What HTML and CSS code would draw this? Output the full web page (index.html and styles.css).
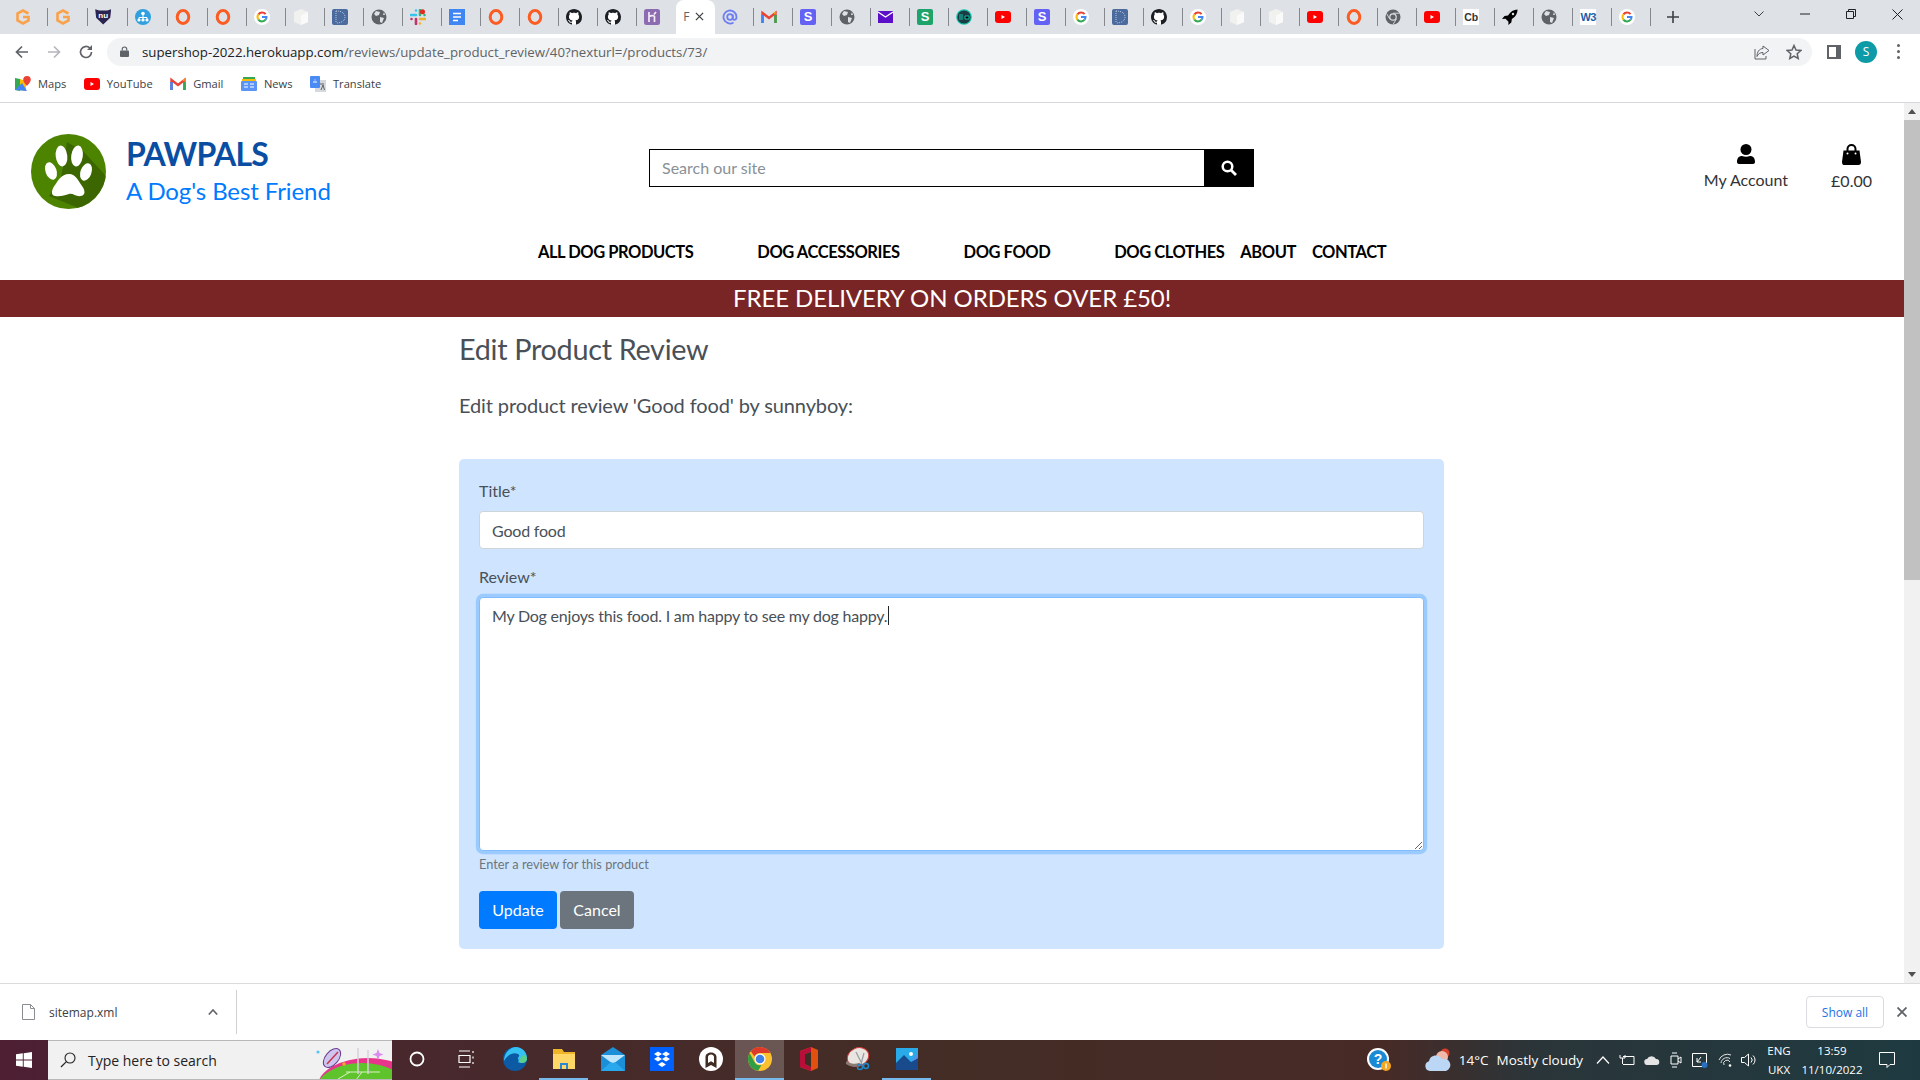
FILE: index.html
```html
<!DOCTYPE html>
<html lang="en">
<head>
  <meta charset="UTF-8" />
  <meta name="viewport" content="width=device-width, initial-scale=1.0"/>
  <title>PawPals - Edit Product Review</title>
  <link rel="stylesheet" href="styles.css">
</head>
<body>

  <!-- favicon symbols, reused by the tab strip -->
  <svg class="symbols" width="0" height="0">
    <symbol id="i-gorange" viewBox="0 0 16 16"><path d="M13.500 4.500L8 1.500 2.500 4.500v7L8 14.500l5.500-3V8H8" fill="none" stroke="#f9a24c" stroke-width="2.600"/></symbol>
    <symbol id="i-sitemap" viewBox="0 0 16 16"><circle cx="8" cy="8" r="8" fill="#2f9fe0"/><path d="M8 5v3M4 11V8.500h8V11M8 8v3" stroke="#fff" fill="none"/><circle cx="8" cy="4.500" r="1.800" fill="#fff"/><circle cx="4" cy="11" r="1.600" fill="#fff"/><circle cx="8" cy="11" r="1.600" fill="#fff"/><circle cx="12" cy="11" r="1.600" fill="#fff"/></symbol>
    <symbol id="i-o" viewBox="0 0 16 16"><ellipse cx="8" cy="8" rx="5.800" ry="6.500" fill="none" stroke="#fc5b21" stroke-width="3"/></symbol>
    <symbol id="i-google" viewBox="0 0 16 16"><circle cx="8" cy="8" r="8" fill="#fff"/><path d="M11.600 5.200A4.500 4.500 0 0 0 4.400 5.400" fill="none" stroke="#ea4335" stroke-width="2"/><path d="M4.400 5.400a4.500 4.500 0 0 0 0 5.200" fill="none" stroke="#fbbc05" stroke-width="2"/><path d="M4.400 10.600a4.500 4.500 0 0 0 7.200 .1" fill="none" stroke="#34a853" stroke-width="2"/><path d="M11.600 10.700A4.500 4.500 0 0 0 12.500 7.900H8" fill="none" stroke="#4285f4" stroke-width="2"/></symbol>
    <symbol id="i-cube" viewBox="0 0 16 16"><path d="M8 0l7 3v10l-7 3-7-3V3z" fill="#f1f1ef"/><path d="M8 6.500l7-3.500v10l-7 3z" fill="#fafafa"/></symbol>
    <symbol id="i-d" viewBox="0 0 16 16"><rect width="16" height="16" rx="2" fill="#4b6a9e"/><path d="M4 2c6 0 9 2.500 9 6s-3 6-9 6" fill="none" stroke="#b9c8e0" stroke-dasharray="1 1"/><path d="M4 2v12" stroke="#b9c8e0" stroke-dasharray="1 1"/></symbol>
    <symbol id="i-globe" viewBox="0 0 16 16"><circle cx="8" cy="8" r="7.500" fill="#5f6368"/><path d="M5 2l4 1-1 3-3 1-2-2zM9 8l4 1-2 5-2-1zM13 3l1 3-2 0z" fill="#dee1e6"/></symbol>
    <symbol id="i-slack" viewBox="0 0 16 16"><path d="M1 6h5M6 1.500v0" stroke="#36c5f0" stroke-width="2.600" stroke-linecap="round"/><path d="M10 1v5M14.500 6h0" stroke="#2eb67d" stroke-width="2.600" stroke-linecap="round"/><path d="M10 10h5M10 14.500v0" stroke="#ecb22e" stroke-width="2.600" stroke-linecap="round"/><path d="M6 10v5M1.500 10h0" stroke="#c2336e" stroke-width="2.600" stroke-linecap="round"/><circle cx="12.500" cy="2.800" r="2.500" fill="#e8251f"/></symbol>
    <symbol id="i-docs" viewBox="0 0 16 16"><rect width="16" height="18" y="-1" rx="1.500" fill="#3f86f3"/><path d="M4 4.500h8M4 8h8M4 11.500h5" stroke="#fff" stroke-width="1.600"/></symbol>
    <symbol id="i-github" viewBox="0 0 16 16"><circle cx="8" cy="8" r="7.500" fill="#fff"/><path fill="#1b1f23" d="M8 0C3.580 0 0 3.580 0 8c0 3.540 2.290 6.530 5.470 7.590.4.07.55-.17.55-.38 0-.19-.01-.82-.01-1.490-2.010.37-2.530-.49-2.690-.94-.09-.23-.48-.94-.82-1.130-.28-.15-.68-.52-.01-.53.63-.01 1.080.58 1.230.82.72 1.210 1.870.87 2.330.66.07-.52.28-.87.51-1.070-1.780-.2-3.640-.89-3.640-3.950 0-.87.31-1.590.82-2.150-.08-.2-.36-1.020.08-2.120 0 0 .67-.21 2.200.82.64-.18 1.320-.27 2-.27s1.360.09 2 .27c1.530-1.040 2.200-.82 2.200-.82.44 1.100.16 1.920.08 2.120.51.56.82 1.270.82 2.150 0 3.070-1.870 3.750-3.650 3.950.29.25.54.73.54 1.480 0 1.070-.01 1.930-.01 2.200 0 .21.15.46.55.38A8.013 8.013 0 0 0 16 8c0-4.420-3.580-8-8-8z"/></symbol>
    <symbol id="i-heroku" viewBox="0 0 16 16"><rect width="16" height="16" rx="2.500" fill="#8c6bb1"/><path d="M5 3v10M5 7.500c2-1 5-1.500 5.500 0V13M10 5.500l2-2.500" stroke="#f2ecf7" stroke-width="1.700" fill="none"/></symbol>
    <symbol id="i-at" viewBox="0 0 16 16"><circle cx="8" cy="8" r="2.800" fill="none" stroke="#6d7ff0" stroke-width="1.800"/><path d="M10.800 5.500v4c0 2 3.700 2 3.700-1.500a6.500 6.500 0 1 0-3 5.500" fill="none" stroke="#6d7ff0" stroke-width="1.800"/></symbol>
    <symbol id="i-gmail" viewBox="0 0 16 16"><path d="M1.500 14V4l6.500 5 6.500-5v10" fill="none" stroke="#ea4335" stroke-width="2.400"/><path d="M1.500 6v8" stroke="#4285f4" stroke-width="2.600"/><path d="M14.500 6v8" stroke="#34a853" stroke-width="2.600"/><path d="M12.500 4l2-1.200v3" fill="#fbbc05"/></symbol>
    <symbol id="i-mail" viewBox="0 0 16 16"><rect y="2" width="15" height="12" fill="#5b0fc8"/><path d="M0 3l7.500 5L15 3" fill="none" stroke="#fff" stroke-width="1.400"/></symbol>
    <symbol id="i-teal" viewBox="0 0 16 16"><circle cx="8" cy="8" r="7.800" fill="#14c4a8"/><circle cx="8" cy="8" r="6.600" fill="#1d3b45"/><path d="M3 6h4M3 8h4M3 10h4M9 7h4v3H9z" stroke="#14c4a8"/></symbol>
    <symbol id="i-youtube" viewBox="0 0 16 16"><rect y="2" width="16" height="12" rx="3" fill="#f00"/><path d="M6.500 6l3.500 2-3.500 2z" fill="#fff"/></symbol>
    <symbol id="i-chrome" viewBox="0 0 16 16"><circle cx="8" cy="8" r="7.500" fill="#5f6368"/><circle cx="8" cy="8" r="3.800" fill="#dee1e6"/><circle cx="8" cy="8" r="2.600" fill="#5f6368"/><path d="M8 4.200h6.500M4.700 10L1.600 4.500M11.300 10L8 15.500" stroke="#dee1e6" stroke-width=".9"/></symbol>
    <symbol id="i-rocket" viewBox="0 0 16 16"><path d="M15.500 .5c-4 .2-7 2-9.500 6L2.500 7 0 10l3.500-.2 3 3L6.300 16l3-2.500.6-3.500c4-2.500 5.500-5.500 5.600-9.500z" fill="#000"/><circle cx="11" cy="5" r="1.200" fill="#dee1e6"/></symbol>
  </svg>

  <!-- browser tabs -->
  <div class="tabstrip">
    <div class="tab tab-wide"><svg class="fav"><use href="#i-gorange"/></svg></div>
    <div class="tab tab-wide"><svg class="fav"><use href="#i-gorange"/></svg></div>
    <div class="tab tab-wide"><div class="fav fav-nu">nu</div></div>
    <div class="tab tab-wide"><svg class="fav"><use href="#i-sitemap"/></svg></div>
    <div class="tab tab-wide"><svg class="fav"><use href="#i-o"/></svg></div>
    <div class="tab"><svg class="fav"><use href="#i-o"/></svg></div>
    <div class="tab"><svg class="fav"><use href="#i-google"/></svg></div>
    <div class="tab"><svg class="fav"><use href="#i-cube"/></svg></div>
    <div class="tab"><svg class="fav"><use href="#i-d"/></svg></div>
    <div class="tab"><svg class="fav"><use href="#i-globe"/></svg></div>
    <div class="tab"><svg class="fav"><use href="#i-slack"/></svg></div>
    <div class="tab"><svg class="fav"><use href="#i-docs"/></svg></div>
    <div class="tab"><svg class="fav"><use href="#i-o"/></svg></div>
    <div class="tab"><svg class="fav"><use href="#i-o"/></svg></div>
    <div class="tab"><svg class="fav"><use href="#i-github"/></svg></div>
    <div class="tab"><svg class="fav"><use href="#i-github"/></svg></div>
    <div class="tab no-sep"><svg class="fav"><use href="#i-heroku"/></svg></div>
    <div class="tab tab-active">
      <span class="tab-letter">F</span>
      <svg class="tab-close" viewBox="0 0 10 10"><path d="M1 1l8 8M9 1l-8 8" stroke="#3c4043" stroke-width="1.400"/></svg>
    </div>
    <div class="tab"><svg class="fav"><use href="#i-at"/></svg></div>
    <div class="tab"><svg class="fav"><use href="#i-gmail"/></svg></div>
    <div class="tab"><div class="fav fav-s fav-purple">S</div></div>
    <div class="tab"><svg class="fav"><use href="#i-globe"/></svg></div>
    <div class="tab"><svg class="fav"><use href="#i-mail"/></svg></div>
    <div class="tab"><div class="fav fav-s fav-green">S</div></div>
    <div class="tab"><svg class="fav"><use href="#i-teal"/></svg></div>
    <div class="tab"><svg class="fav"><use href="#i-youtube"/></svg></div>
    <div class="tab"><div class="fav fav-s fav-purple">S</div></div>
    <div class="tab"><svg class="fav"><use href="#i-google"/></svg></div>
    <div class="tab"><svg class="fav"><use href="#i-d"/></svg></div>
    <div class="tab"><svg class="fav"><use href="#i-github"/></svg></div>
    <div class="tab"><svg class="fav"><use href="#i-google"/></svg></div>
    <div class="tab"><svg class="fav"><use href="#i-cube"/></svg></div>
    <div class="tab"><svg class="fav"><use href="#i-cube"/></svg></div>
    <div class="tab"><svg class="fav"><use href="#i-youtube"/></svg></div>
    <div class="tab"><svg class="fav"><use href="#i-o"/></svg></div>
    <div class="tab"><svg class="fav"><use href="#i-chrome"/></svg></div>
    <div class="tab"><svg class="fav"><use href="#i-youtube"/></svg></div>
    <div class="tab"><div class="fav fav-cb">Cb</div></div>
    <div class="tab"><svg class="fav"><use href="#i-rocket"/></svg></div>
    <div class="tab"><svg class="fav"><use href="#i-globe"/></svg></div>
    <div class="tab"><div class="fav fav-w3">W3</div></div>
    <div class="tab"><svg class="fav"><use href="#i-google"/></svg></div>
    <svg class="new-tab" viewBox="0 0 12 12"><path d="M6 0v12M0 6h12" stroke="#3c4043" stroke-width="1.600"/></svg>
    <div class="window-btns">
      <div class="win-btn win-chevron"><svg width="10" height="6" viewBox="0 0 10 6"><path d="M.5 .5L5 5 9.500 .5" fill="none" stroke="#3c4043"/></svg></div>
      <div class="win-btn"><svg width="10" height="10" viewBox="0 0 10 10"><path d="M0 5h10" stroke="#202124"/></svg></div>
      <div class="win-btn"><svg width="10" height="10" viewBox="0 0 10 10"><path d="M.5 2.500h7v7h-7zM2.500 2.500v-2h7v7h-2" fill="none" stroke="#202124"/></svg></div>
      <div class="win-btn"><svg width="11" height="11" viewBox="0 0 11 11"><path d="M.5 .5l10 10M10.500 .5l-10 10" stroke="#202124"/></svg></div>
    </div>
  </div>

  <!-- back, forward, address bar -->
  <div class="toolbar">
    <svg class="tool-btn" viewBox="0 0 16 16"><path d="M14 8H2.500M8 2.500L2.500 8 8 13.500" fill="none" stroke="#5f6368" stroke-width="1.700"/></svg>
    <svg class="tool-btn" viewBox="0 0 16 16"><path d="M2 8h11.500M8 2.500L13.500 8 8 13.500" fill="none" stroke="#b4b7bb" stroke-width="1.700"/></svg>
    <svg class="tool-btn" viewBox="0 0 16 16"><path d="M13.500 8A5.500 5.500 0 1 1 11.800 4" fill="none" stroke="#5f6368" stroke-width="1.700"/><path d="M14 1v5H9z" fill="#5f6368"/></svg>
    <div class="address">
      <svg class="lock" viewBox="0 0 10 12"><path d="M2.500 5V3.500a2.500 2.500 0 0 1 5 0V5" fill="none" stroke="#5f6368" stroke-width="1.300"/><rect y="5" width="10" height="7" rx="1" fill="#5f6368"/></svg>
      <span class="url"><span class="url-host">supershop-2022.herokuapp.com</span>/reviews/update_product_review/40?nexturl=/products/73/</span>
      <svg class="addr-icon addr-share" viewBox="0 0 16 16"><path d="M9 2l6 4.500L9 11V8.500C6 8.500 4 10 3 12.500 3 8 5 4.800 9 4.500z" fill="none" stroke="#5f6368"/><path d="M1 5v10h11v-3" fill="none" stroke="#5f6368"/></svg>
      <svg class="addr-icon" viewBox="0 0 16 16"><path d="M8 1.500l2 4.500 4.800.5-3.600 3.200 1 4.800L8 12l-4.200 2.500 1-4.800L1.200 6.500 6 6z" fill="none" stroke="#5f6368" stroke-width="1.500"/></svg>
    </div>
    <svg class="panel-icon" viewBox="0 0 14 14"><path d="M0 0h14v14H0z M2 2v10h7V2z" fill="#5f6368" fill-rule="evenodd"/></svg>
    <div class="avatar">S</div>
    <div class="menu-dots"><i></i><i></i><i></i></div>
  </div>

  <!-- bookmarks -->
  <div class="bookmarks">
    <div class="bookmark">
      <svg class="fav" viewBox="0 0 16 16"><path d="M0 2l5 1v12l-5-1z" fill="#34a853"/><path d="M5 3l6 2v10l-6-1z" fill="#fbbc05"/><path d="M0 14l7-7 5 8z" fill="#4285f4"/><path d="M12 0a3.800 3.800 0 0 0-3.800 3.800C8.200 6 12 10 12 10s3.800-4 3.800-6.200A3.800 3.800 0 0 0 12 0z" fill="#ea4335"/></svg>
      Maps
    </div>
    <div class="bookmark"><svg class="fav"><use href="#i-youtube"/></svg>YouTube</div>
    <div class="bookmark"><svg class="fav"><use href="#i-gmail"/></svg>Gmail</div>
    <div class="bookmark">
      <svg class="fav" viewBox="0 0 16 16"><rect x="2" y="1" width="12" height="6" fill="#34a853"/><rect x="1" y="3" width="14" height="2" fill="#fbbc05"/><rect y="5" width="16" height="10" rx="1" fill="#5a95f5"/><path d="M3 8h4M3 11h4M9 8h4M9 11h4" stroke="#fff"/></svg>
      News
    </div>
    <div class="bookmark">
      <svg class="fav" viewBox="0 0 16 16"><rect x="5" y="4" width="11" height="12" fill="#d5d8dd"/><rect width="10" height="12" rx="1" fill="#4a8af4"/><path d="M3 6h4M5 3.500v1" stroke="#fff"/><path d="M10 8h4M11 14l2-5 1.500 5" fill="none" stroke="#5f6368"/></svg>
      Translate
    </div>
  </div>

  <!-- the shop page and its scrollbar -->
  <div class="viewport">
    <div class="page">
      <header class="site-header">
        <div class="logo">
          <svg class="logo-mark" viewBox="0 0 75 75">
            <defs><clipPath id="logoClip"><circle cx="37.500" cy="37.500" r="37.500"/></clipPath></defs>
            <circle cx="37.500" cy="37.500" r="37.500" fill="#4c8400"/>
            <path d="M36 8L53 18 75 42 75 75 50 75 18 62 30 44z" fill="#3b6600" clip-path="url(#logoClip)"/>
            <ellipse cx="30.500" cy="22" rx="5.800" ry="10.500" fill="#fff" transform="rotate(-6 30.500 22)"/>
            <ellipse cx="46" cy="22" rx="5.800" ry="10.500" fill="#fff" transform="rotate(8 46 22)"/>
            <ellipse cx="20" cy="37" rx="5.500" ry="9" fill="#fff" transform="rotate(-20 20 37)"/>
            <ellipse cx="55" cy="38" rx="5.500" ry="9" fill="#fff" transform="rotate(20 55 38)"/>
            <path d="M38 40c7 0 10 8 13 12 3 4 4 9-1 10-5 1-8-3-12-2-4 1-9 3-14 2-5-1-3-7 0-11 3-4 6-11 14-11z" fill="#fff"/>
          </svg>
          <div class="brand">
            <div class="brand-name">PAWPALS</div>
            <div class="brand-tag">A Dog's Best Friend</div>
          </div>
        </div>

        <form class="search">
          <input class="search-input" type="text" placeholder="Search our site" />
          <button class="search-btn" type="button" aria-label="Search">
            <svg width="16" height="16" viewBox="0 0 16 16"><circle cx="6.500" cy="6.500" r="4.800" fill="none" stroke="#fff" stroke-width="2.500"/><path d="M10.200 10.200L15 15" stroke="#fff" stroke-width="2.800"/></svg>
          </button>
        </form>

        <div class="account">
          <a class="account-link" href="#">
            <svg width="18" height="20" viewBox="0 0 18 20"><ellipse cx="9" cy="5.500" rx="5.500" ry="5.500" fill="#000"/><path d="M0 18c0-4 2-6 5-6 1.200.5 2.500 .8 4 .8s2.800-.3 4-.8c3 0 5 2 5 6 0 1.200-.8 2-2 2H2c-1.200 0-2-.8-2-2z" fill="#000"/></svg>
            My Account
          </a>
          <a class="account-link" href="#">
            <svg width="19" height="21" viewBox="0 0 19 21"><path d="M5.500 8V5a4 4 0 0 1 8 0v3" fill="none" stroke="#000" stroke-width="2"/><path d="M1.500 6.500h16l1.500 11.500c0 1.700-1 3-2.500 3h-15C1 21 0 19.700 0 18z" fill="#000"/><circle cx="5.500" cy="9.500" r="1" fill="#fff"/><circle cx="13.500" cy="9.500" r="1" fill="#fff"/></svg>
            £0.00
          </a>
        </div>
      </header>

      <nav class="main-nav">
        <a class="nav-link nav-wide" href="#">ALL DOG PRODUCTS</a>
        <a class="nav-link nav-wide" href="#">DOG ACCESSORIES</a>
        <a class="nav-link nav-wide" href="#">DOG FOOD</a>
        <a class="nav-link" href="#">DOG CLOTHES</a>
        <a class="nav-link" href="#">ABOUT</a>
        <a class="nav-link" href="#">CONTACT</a>
      </nav>

      <div class="delivery-banner">FREE DELIVERY ON ORDERS OVER £50!</div>

      <main class="content">
        <h1 class="page-title">Edit Product Review</h1>
        <p class="page-sub">Edit product review 'Good food' by sunnyboy:</p>

        <form class="review-card">
          <label class="field-label" for="title">Title*</label>
          <input class="field-input" id="title" type="text" value="Good food" />

          <label class="field-label field-label-review" for="review">Review*</label>
          <div class="textarea-wrap">
            <textarea class="field-area" id="review">My Dog enjoys this food. I am happy to see my dog happy.</textarea>
            <span class="text-caret"></span>
          </div>
          <small class="help-text">Enter a review for this product</small>

          <div class="form-btns">
            <button class="btn btn-primary" type="button">Update</button>
            <button class="btn btn-secondary" type="button">Cancel</button>
          </div>
        </form>
      </main>
    </div>

    <div class="scrollbar">
      <div class="scroll-arrow scroll-up"></div>
      <div class="scroll-thumb"></div>
      <div class="scroll-arrow scroll-down"></div>
    </div>
  </div>

  <!-- downloads shelf -->
  <div class="download-bar">
    <div class="download-item">
      <svg width="13" height="16" viewBox="0 0 13 16"><path d="M.5 .5h8l4 4v11H.5z" fill="#fff" stroke="#8a8d91"/><path d="M8.500 .5v4h4" fill="none" stroke="#8a8d91"/></svg>
      <span class="download-name">sitemap.xml</span>
      <svg class="download-caret" width="10" height="6" viewBox="0 0 10 6"><path d="M.8 5.500L5 1l4.200 4.500" fill="none" stroke="#5f6368" stroke-width="1.600"/></svg>
    </div>
    <button class="show-all" type="button">Show all</button>
    <svg class="download-close" width="10" height="10" viewBox="0 0 10 10"><path d="M.5 .5l9 9M9.500 .5l-9 9" stroke="#5f6368" stroke-width="1.800"/></svg>
  </div>

  <!-- windows taskbar -->
  <footer class="taskbar">
    <div class="start">
      <svg width="16" height="16" viewBox="0 0 16 16"><path d="M0 2.300l6.800-1v6.200H0zM7.700 1.200L16 0v7.500H7.700zM0 8.400h6.800v6.300l-6.800-1zM7.700 8.400H16V16l-8.300-1.200z" fill="#fff"/></svg>
    </div>
    <div class="task-search">
      <svg width="16" height="16" viewBox="0 0 16 16"><circle cx="10" cy="6" r="5" fill="none" stroke="#222" stroke-width="1.100"/><path d="M6.400 9.600L1 15" stroke="#222" stroke-width="1.200"/></svg>
      <span>Type here to search</span>
      <svg class="search-doodle" width="76" height="40" viewBox="0 0 76 40">
        <ellipse cx="52" cy="46" rx="50" ry="28" fill="#e8358b"/>
        <ellipse cx="46" cy="50" rx="46" ry="27" fill="#5fc32b"/>
        <path d="M30 32h34M22 39l12-7M40 40l6-8" stroke="#d9f3c5" fill="none"/>
        <path d="M42 8v26M52 10v24" stroke="#d8d0dc" stroke-width="1.500"/>
        <ellipse cx="16" cy="18" rx="11" ry="6.500" transform="rotate(-50 16 18)" fill="#cfc4ee" stroke="#6b3f8f"/>
        <path d="M11 24l11-12" stroke="#c8354e" stroke-width="1.500"/>
        <circle cx="2" cy="12" r="1.600" fill="#57c5f0"/>
        <circle cx="28" cy="24" r="1.800" fill="#f5a623"/>
        <path d="M62 9l1.500 4 4 1.500-4 1.500-1.500 4-1.500-4-4-1.500 4-1.500z" fill="#d98cf0"/>
      </svg>
    </div>
    <div class="task-icon">
      <svg width="16" height="16" viewBox="0 0 16 16"><circle cx="8" cy="8" r="6.500" fill="none" stroke="#fff" stroke-width="1.800"/></svg>
    </div>
    <div class="task-icon">
      <svg width="16" height="18" viewBox="0 0 16 18"><path d="M1 1h11M1 17h11M1 5.500h11v7H1zM15 1v2M15 6.500v2M15 12v2" fill="none" stroke="#fff" stroke-width="1.200"/></svg>
    </div>
    <div class="task-icon">
      <svg width="24" height="24" viewBox="0 0 24 24"><circle cx="12" cy="12" r="12" fill="#0c59a4"/><path d="M1 14C1 6 7 0 13 0c6 0 11 5 11 11 0 3-3 5-6 5-2 0-4-1-4-3 0-3 3-3 2-5-1-2-7-3-11 1-2 2-3 3-4 5z" fill="#35c1f1"/><path d="M24 12c0-3-3-5-5-3-2 2-4 7 0 7 3 0 5-2 5-4z" fill="#5ad08a"/><circle cx="12" cy="13.500" r="3.500" fill="#0c59a4"/></svg>
    </div>
    <div class="task-icon task-open">
      <svg width="22" height="20" viewBox="0 0 22 20"><path d="M0 0h9l2 3h11v17H0z" fill="#f0b429"/><path d="M0 5h22v15H0z" fill="#ffd766"/><path d="M7 14h8v6H7z" fill="#2b86d6"/><path d="M9 16h4v4H9z" fill="#ffd766"/></svg>
    </div>
    <div class="task-icon">
      <svg width="24" height="24" viewBox="0 0 24 24"><path d="M12 0l12 8v16H0V8z" fill="#1c8fd9"/><path d="M0 8h24L12 17z" fill="#bfe6fb"/><path d="M0 24l10-9 2 1 2-1 10 9z" fill="#2aa8ee"/></svg>
    </div>
    <div class="task-icon">
      <svg width="24" height="24" viewBox="0 0 24 24"><rect width="24" height="24" fill="#0061ff"/><path d="M8 4.500l4 2.500-4 2.500-4-2.500zM16 4.500l4 2.500-4 2.500-4-2.500zM8 9.500l4 2.500-4 2.500-4-2.500zM16 9.500l4 2.500-4 2.500-4-2.500zM12 15l4 2.500-4 2.500-4-2.500z" fill="#fff"/></svg>
    </div>
    <div class="task-icon">
      <svg width="24" height="24" viewBox="0 0 24 24"><ellipse cx="12" cy="12" rx="12" ry="12" fill="#fff"/><path d="M6.500 21V10C6.500 4 17.500 4 17.500 10v11l-5.500-3z" fill="#3f2d25"/><path d="M9 16V10c0-3.500 6-3.500 6 0v6l-3-1.800z" fill="#fff"/></svg>
    </div>
    <div class="task-icon task-active">
      <svg width="24" height="24" viewBox="0 0 24 24"><circle cx="12" cy="12" r="12" fill="#fbc02d"/><path d="M12 0a12 12 0 0 1 10.400 6H12a6 6 0 0 0-5.500 3.500L2.800 4.300A12 12 0 0 1 12 0z" fill="#dd3a2c"/><path d="M1.600 6a12 12 0 0 0 8.500 17.800l3.400-5.800a6 6 0 0 1-7-3z" fill="#2f9e44"/><circle cx="12" cy="12" r="5.500" fill="#fff"/><circle cx="12" cy="12" r="4.300" fill="#3f7fe8"/></svg>
    </div>
    <div class="task-icon">
      <svg width="18" height="24" viewBox="0 0 18 24"><path d="M0 4L11 0l7 3v18l-7 3-11-4z" fill="#e2500f"/><path d="M0 4L11 0v5L5 7v10l6 3v4L0 20z" fill="#b80f3a"/><path d="M5 7l6-2v15l-6-3z" fill="#3f2d25"/></svg>
    </div>
    <div class="task-icon">
      <svg width="24" height="26" viewBox="0 0 24 26"><ellipse cx="12" cy="11" rx="11" ry="9" transform="rotate(-25 12 11)" fill="#e9e6e2" stroke="#d83a3a"/><path d="M0 16c4 4 10 4 14 2" stroke="#8a7a72" stroke-width="3" fill="none"/><path d="M10 6l6 12M18 7l-3 11" stroke="#9aa0a6" stroke-width="1.300"/><circle cx="14" cy="21" r="2.500" fill="none" stroke="#1e88c9" stroke-width="1.500"/><circle cx="20" cy="20" r="2.500" fill="none" stroke="#1e88c9" stroke-width="1.500"/></svg>
    </div>
    <div class="task-icon task-open">
      <svg width="22" height="22" viewBox="0 0 22 22"><rect width="22" height="22" fill="#29aae9"/><path d="M0 22V15l8-8 7 7 7-4v12z" fill="#184a8c"/><path d="M15 14l7-4V5z" fill="#5b8def"/><circle cx="15" cy="6" r="2" fill="#fff"/></svg>
    </div>

    <div class="tray">
      <svg class="tray-help" width="24" height="24" viewBox="0 0 24 24"><circle cx="11" cy="11" r="11" fill="#fff"/><circle cx="11" cy="11" r="9" fill="#1a8ad4"/><text x="11" y="16" font-size="14" font-family="Liberation Sans" font-weight="700" fill="#fff" text-anchor="middle">?</text><circle cx="19" cy="18" r="5" fill="#f5a623"/><path d="M19 15.500v5" stroke="#fff" stroke-width="1.400"/></svg>
      <svg class="tray-weather" width="26" height="26" viewBox="0 0 26 26"><circle cx="20" cy="6" r="4.500" fill="#d6402b"/><circle cx="17" cy="10" r="6" fill="#f2b8a8"/><path d="M5 24a5 5 0 0 1-1-9.800A7 7 0 0 1 17 12a5 5 0 0 1 4 12z" fill="#bcd6f5"/></svg>
      <span class="tray-temp">14°C</span>
      <span class="tray-forecast">Mostly cloudy</span>
      <div class="tray-icons">
        <svg width="14" height="8" viewBox="0 0 14 8"><path d="M1 7.500L7 1l6 6.500" fill="none" stroke="#fff" stroke-width="1.200"/></svg>
        <svg width="16" height="12" viewBox="0 0 16 12"><path d="M4 2.500h11v8H4M1 1v3h5V1M3.500 4v6" fill="none" stroke="#fff"/></svg>
        <svg width="16" height="10" viewBox="0 0 16 10"><path d="M3.500 10a3 3 0 0 1-.5-6 5 5 0 0 1 9 0 3 3 0 0 1 .5 6z" fill="#e4e4e4"/></svg>
        <svg width="12" height="18" viewBox="0 0 12 18"><path d="M1 5h7v8H1zM8 8l3-2v6l-3-2M2 2h5M2 16h5" fill="none" stroke="#fff"/></svg>
        <svg width="16" height="16" viewBox="0 0 16 16"><path d="M.5 1.500h14v13H.5zM5 10l4-5M5 6v4h4" fill="none" stroke="#fff"/><circle cx="12.500" cy="13" r="3" fill="#2a6fc4"/></svg>
        <svg width="14" height="14" viewBox="0 0 14 14"><path d="M1 7a9 9 0 0 1 12-5M3 10a6 6 0 0 1 9-4.500M6 12a3 3 0 0 1 6-3" fill="none" stroke="#e4e4e4"/><circle cx="12" cy="12.500" r="1.300" fill="#fff"/></svg>
        <svg width="16" height="14" viewBox="0 0 16 14"><path d="M.5 4.500h3L7.500 1v12l-4-3.500h-3zM10 4.500a3.500 3.500 0 0 1 0 5M12 2.500a6 6 0 0 1 0 9" fill="none" stroke="#fff"/></svg>
      </div>
      <div class="tray-lang"><span>ENG</span><span>UKX</span></div>
      <div class="tray-clock"><span>13:59</span><span>11/10/2022</span></div>
      <div class="tray-notify">
        <svg width="16" height="16" viewBox="0 0 16 16"><path d="M.5 .5h15v12H11L8 15.500 8 12.500H.5z" fill="none" stroke="#fff"/></svg>
      </div>
    </div>
  </footer>

</body>
</html>
```

FILE: styles.css
```css
/* whole window is one fixed height column */
* {
  box-sizing: border-box;
}

html,
body {
  height: 100%;
}

body {
  margin: 0;
  height: 1080px;
  overflow: hidden;
  display: flex;
  flex-direction: column;
  font-family: "Lato", "Noto Sans", sans-serif;
  color: #212529;
  background: #fff;
}

a {
  color: inherit;
  text-decoration: none;
}

.symbols {
  position: absolute;
}

.fav {
  width: 16px;
  height: 16px;
  flex: none;
}

/* favicons that are just letters */
.fav-s,
.fav-cb,
.fav-w3,
.fav-nu {
  font-family: "Liberation Sans", sans-serif;
  font-weight: 700;
  text-align: center;
}

.fav-s {
  border-radius: 2px;
  color: #fff;
  font-size: 13px;
  line-height: 16px;
}

.fav-purple {
  background: #6461f5;
}

.fav-green {
  background: #1ea36b;
}

.fav-nu {
  background: #2b2350;
  color: #fff;
  font-size: 8px;
  line-height: 14px;
  clip-path: polygon(0 5%, 25% 12%, 75% 12%, 100% 5%, 94% 58%, 50% 100%, 6% 58%);
}

.fav-cb {
  background: #fff;
  color: #333;
  font-size: 10.5px;
  line-height: 16px;
}

.fav-w3 {
  background: #fff;
  color: #1a5fa8;
  font-size: 11px;
  line-height: 16px;
  letter-spacing: -0.5px;
}

/* tab strip */
.tabstrip {
  display: flex;
  align-items: stretch;
  height: 34px;
  padding-left: 8.2px;
  background: #dee1e6;
  flex: none;
}

.tab {
  width: 39px;
  flex: none;
  display: flex;
  align-items: center;
  padding: 0 0 1px 7px;
  background: linear-gradient(#85888c, #85888c) right 8px / 1px 18px no-repeat;
}

.tab-wide {
  width: 40px;
}

.no-sep {
  background: none;
}

.tab-active {
  background: #fff;
  border-radius: 8px 8px 0 0;
  padding-left: 7px;
  gap: 9px;
}

.tab-letter {
  font: 12px "Open Sans", sans-serif;
  color: #5f6368;
  width: 3px;
}

.tab-close {
  width: 9px;
  height: 9px;
  flex: none;
}

.new-tab {
  width: 12px;
  height: 12px;
  margin: 11px 0 0 16px;
  flex: none;
}

.window-btns {
  margin-left: auto;
  display: flex;
}

.win-btn {
  width: 46px;
  display: flex;
  align-items: center;
  justify-content: center;
  padding-bottom: 6px;
}

.win-chevron {
  width: 36px;
  padding-right: 10px;
}

/* address row */
.toolbar {
  height: 38px;
  flex: none;
  display: flex;
  align-items: center;
  padding: 0 0 3px 14px;
  background: #fff;
}

.tool-btn {
  width: 16px;
  height: 16px;
  margin-right: 16px;
  flex: none;
}

.address {
  width: 1705px;
  height: 28px;
  margin-left: -3px;
  display: flex;
  align-items: center;
  padding: 0 10px 0 13px;
  border-radius: 14px;
  background: #f1f3f4;
}

.lock {
  width: 9px;
  height: 11px;
  margin-right: 13px;
  flex: none;
}

.url {
  flex: 1;
  font: 13.26px "Open Sans", sans-serif;
  color: #5f6368;
  white-space: nowrap;
}

.url-host {
  color: #202124;
}

.addr-icon {
  width: 16px;
  height: 16px;
  margin-left: 16px;
  flex: none;
}

.panel-icon {
  width: 14px;
  height: 14px;
  margin-left: 15px;
  flex: none;
}

.avatar {
  width: 22px;
  height: 22px;
  margin-left: 14px;
  border-radius: 50%;
  background: #0e9ba8;
  color: #fff;
  font: 12px/22px "Open Sans", sans-serif;
  text-align: center;
  flex: none;
}

.menu-dots {
  margin-left: 20px;
  display: flex;
  flex-direction: column;
  gap: 3px;
}

.menu-dots i {
  width: 3px;
  height: 3px;
  border-radius: 50%;
  background: #5f6368;
}

/* bookmarks row */
.bookmarks {
  height: 31px;
  flex: none;
  display: flex;
  align-items: center;
  gap: 17.5px;
  padding: 0 0 7px 15px;
  border-bottom: 1px solid #d6d8db;
  background: #fff;
}

.bookmark {
  display: flex;
  align-items: center;
  gap: 7px;
  font: 11.15px "Open Sans", sans-serif;
  color: #3c4043;
}

/* page area */
.viewport {
  flex: 1;
  min-height: 0;
  display: flex;
}

.page {
  flex: 1;
  min-width: 0;
}

.site-header {
  display: grid;
  grid-template-columns: 1fr auto 1fr;
  align-items: start;
  height: 126px;
  padding: 31px 32px 0 31px;
}

.logo {
  display: flex;
  gap: 20px;
}

.logo-mark {
  width: 75px;
  height: 75px;
  flex: none;
}

.brand-name {
  font-size: 32px;
  line-height: 40px;
  font-weight: 700;
  letter-spacing: -0.7px;
  color: #0a4ea3;
}

.brand-tag {
  font-size: 24px;
  line-height: 34px;
  letter-spacing: -0.1px;
  color: #007bff;
}

.search {
  display: flex;
  width: 605px;
  height: 38px;
  margin-top: 15px;
}

.search-input {
  flex: 1;
  min-width: 0;
  padding: 0 12px 2px;
  border: 1px solid #000;
  border-radius: 0;
  font: 16px "Lato", sans-serif;
}

.search-input::placeholder {
  color: #6c757d;
  opacity: .8;
}

.search-btn {
  width: 49px;
  border: 0;
  background: #000;
  display: flex;
  align-items: center;
  justify-content: center;
  padding: 0 2px 0 0;
}

.account {
  display: flex;
  justify-content: flex-end;
  gap: 43px;
  margin-top: 10px;
}

.account-link {
  display: flex;
  flex-direction: column;
  align-items: center;
  gap: 4px;
  font-size: 16px;
  line-height: 24px;
  color: #333;
}

.main-nav {
  display: flex;
  justify-content: center;
  align-items: center;
  height: 45px;
  padding-left: 20px;
  margin-bottom: 6px;
}

.nav-link {
  padding: 0 8px;
  font-size: 16.5px;
  font-weight: 700;
  letter-spacing: -0.45px;
  color: #000;
}

.nav-wide {
  margin-right: 48px;
}

.delivery-banner {
  height: 37px;
  background: #7a2525;
  color: #fff;
  font-size: 24px;
  line-height: 35px;
  letter-spacing: -0.08px;
  text-align: center;
}

/* review form */
.content {
  width: 985px;
  margin: 0 460px 0 459px;
}

.page-title {
  margin: 15px 0 0;
  font-size: 28.8px;
  line-height: 34px;
  font-weight: 400;
  letter-spacing: -0.3px;
  color: #495057;
}

.page-sub {
  margin: 27px 0 0;
  font-size: 20px;
  line-height: 24px;
  letter-spacing: -0.12px;
  color: #495057;
}

.review-card {
  margin-top: 42px;
  padding: 20px 20px 20px;
  border-radius: 5px;
  background: #cfe5ff;
}

.field-label {
  display: block;
  margin-bottom: 8px;
  font-size: 16px;
  line-height: 24px;
  color: #495057;
}

.field-label-review {
  margin: 16px 0 8px;
}

.field-input {
  display: block;
  width: 100%;
  height: 38px;
  padding: 0 12px;
  border: 1px solid #ced4da;
  border-radius: 4px;
  background: #fff;
  color: #495057;
  font: 16px "Lato", sans-serif;
  letter-spacing: -0.2px;
}

.textarea-wrap {
  position: relative;
  height: 254px;
}

.field-area {
  display: block;
  width: 100%;
  height: 100%;
  padding: 6px 12px;
  border: 1px solid #80bdff;
  border-radius: 4px;
  background: #fff;
  color: #495057;
  font: 16px/24px "Lato", sans-serif;
  letter-spacing: -0.22px;
  outline: 0;
  box-shadow: 0 0 0 3.2px rgba(0, 123, 255, .25);
}

/* caret sits on top of the textarea */
.text-caret {
  position: absolute;
  left: 409px;
  top: 9px;
  width: 1px;
  height: 19px;
  background: #212529;
}

.help-text {
  display: block;
  font-size: 12.8px;
  line-height: 20px;
  margin-top: 3px;
  color: #6c757d;
}

.form-btns {
  display: flex;
  gap: 3px;
  margin-top: 17px;
}

.btn {
  height: 38px;
  padding: 0 13px 2px;
  border: 0;
  border-radius: 4px;
  color: #fff;
  font: 16px "Lato", sans-serif;
}

.btn-primary {
  width: 78px;
  background: #007bff;
}

.btn-secondary {
  width: 74px;
  background: #6c757d;
}

/* scrollbar on the right of the page */
.scrollbar {
  width: 16px;
  flex: none;
  display: flex;
  flex-direction: column;
  background: #f1f1f1;
}

.scroll-arrow {
  height: 17px;
  flex: none;
  display: flex;
  align-items: center;
  justify-content: center;
}

.scroll-arrow::before {
  content: "";
  border-left: 4px solid transparent;
  border-right: 4px solid transparent;
}

.scroll-up::before {
  border-bottom: 5px solid #505050;
}

.scroll-down {
  margin-top: auto;
}

.scroll-down::before {
  border-top: 5px solid #505050;
}

.scroll-thumb {
  height: 460px;
  background: #c1c1c1;
}

/* download shelf */
.download-bar {
  height: 57px;
  flex: none;
  display: flex;
  align-items: center;
  border-top: 1px solid #dcdcdc;
  background: #fff;
}

.download-item {
  width: 237px;
  height: 44px;
  display: flex;
  align-items: center;
  padding-left: 22px;
  border-right: 1px solid #d0d0d0;
}

.download-name {
  margin-left: 14px;
  font: 12px "Open Sans", sans-serif;
  color: #3c4043;
}

.download-caret {
  margin-left: 91px;
}

.show-all {
  width: 78px;
  height: 32px;
  margin-left: auto;
  padding: 0;
  border: 1px solid #dadce0;
  border-radius: 4px;
  background: #fff;
  color: #1a73e8;
  font: 12px "Open Sans", sans-serif;
}

.download-close {
  margin: 0 13px 0 13px;
}

/* windows taskbar */
.taskbar {
  height: 40px;
  flex: none;
  display: flex;
  align-items: stretch;
  color: #fff;
  background: linear-gradient(90deg, #4e1f33 0%, #47292c 25%, #432d25 50%, #472a26 72%, #2a3539 80%, #1e3a40 100%);
}

.start {
  width: 48px;
  display: flex;
  align-items: center;
  justify-content: center;
}

.task-search {
  width: 344px;
  display: flex;
  align-items: center;
  padding-left: 12px;
  gap: 12px;
  overflow: hidden;
  background: #f1f1f1;
  border-top: 1px solid #b8b8b8;
  border-bottom: 1px solid #b8b8b8;
  color: #222;
  font: 14px "Open Sans", sans-serif;
}

.search-doodle {
  margin-left: auto;
  flex: none;
}

.task-icon {
  width: 49px;
  display: flex;
  align-items: center;
  justify-content: center;
  border-bottom: 2px solid transparent;
}

.task-open {
  border-bottom-color: #76b9ed;
}

.task-active {
  background: rgba(255, 255, 255, .2);
  border-bottom-color: #76b9ed;
}

.tray {
  margin-left: auto;
  display: flex;
  align-items: center;
  padding-right: 13px;
  font: 13.5px "Open Sans", sans-serif;
}

.tray-help {
  margin-right: 34px;
}

.tray-temp {
  margin-left: 8px;
}

.tray-forecast {
  margin-left: 8px;
  margin-right: 8px;
}

.tray-icons {
  width: 170px;
  display: grid;
  grid-template-columns: repeat(7, 1fr);
  justify-items: center;
  align-items: center;
}

.tray-lang,
.tray-clock {
  display: flex;
  flex-direction: column;
  align-items: center;
  font-size: 11.5px;
  line-height: 19px;
}

.tray-lang {
  width: 36px;
}

.tray-clock {
  width: 70px;
}

.tray-notify {
  width: 40px;
  display: flex;
  align-items: center;
  justify-content: center;
}
```
